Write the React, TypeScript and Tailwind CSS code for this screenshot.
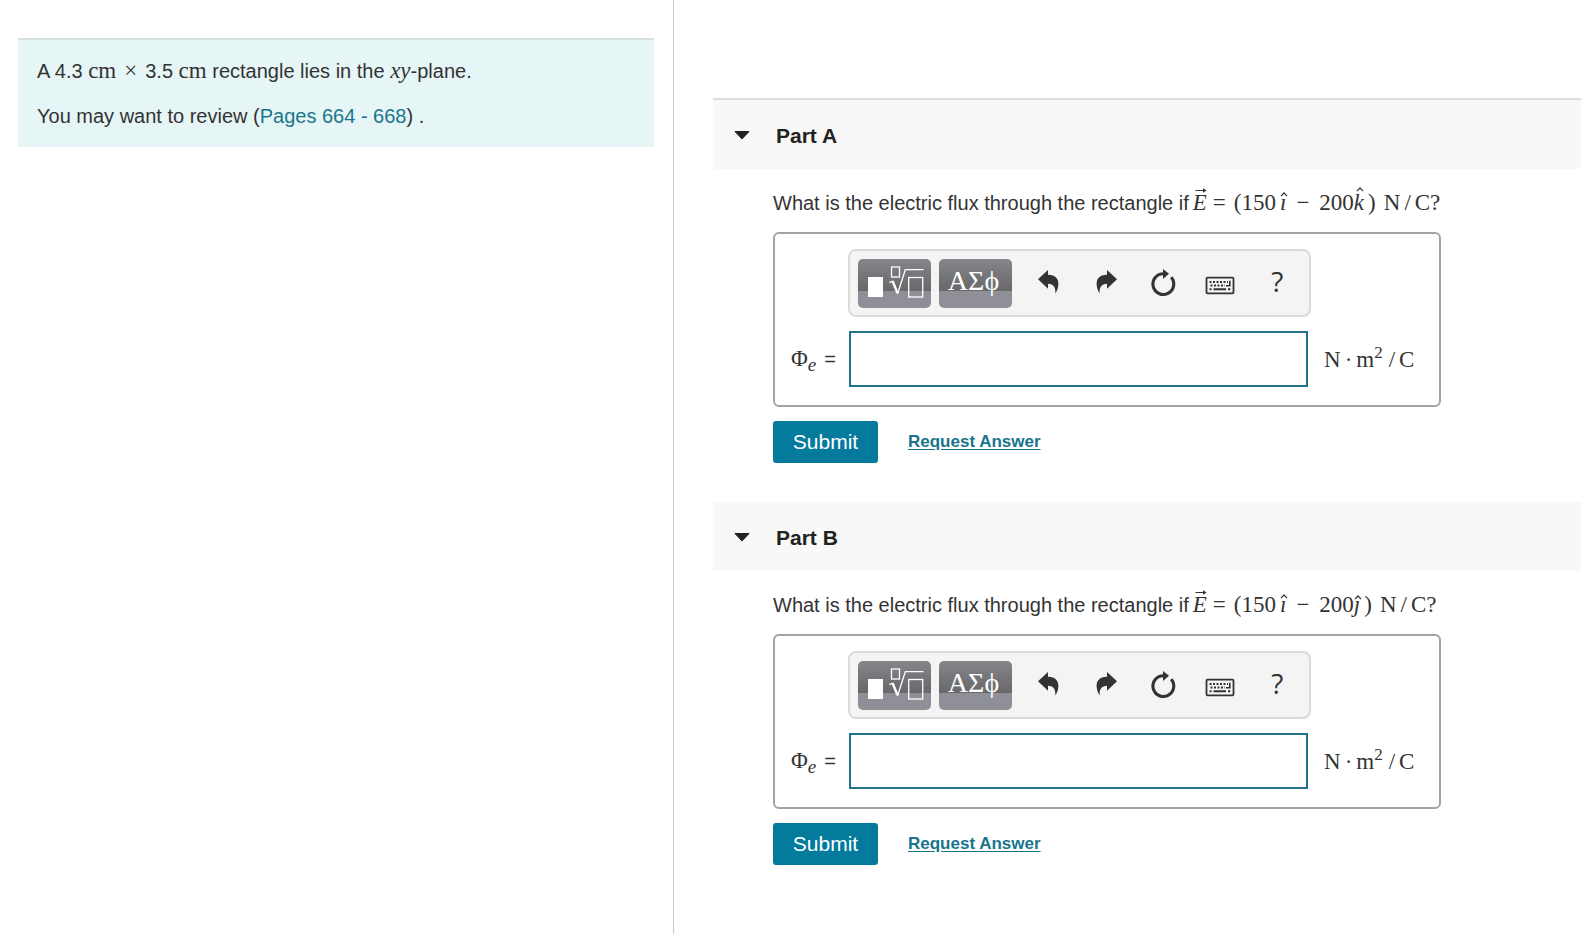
import { useId, useState } from "react";
import type { ReactNode } from "react";
import clsx from "clsx";

const parts = [
  { key: "A", second: "k", first: true },
  { key: "B", second: "ȷ", first: false },
];

const toolButton =
  "flex h-[49px] w-[73px] items-center justify-center rounded-[5px] bg-linear-to-b from-[#85858a] from-0% via-[#68686b] via-66% to-[#8f8f97] to-66% text-white";

function Serif({ children, italic, className }: { children: ReactNode; italic?: boolean; className?: string }) {
  return (
    <span className={clsx("font-['Liberation_Serif',serif] text-[23px] leading-none", italic && "italic", className)}>
      {children}
    </span>
  );
}

function Vector({ children }: { children: ReactNode }) {
  return (
    <Serif italic className="relative">
      {children}
      <svg viewBox="0 0 12 6" className="absolute -top-1 left-0.5 h-[6px] w-3" fill="none" stroke="currentColor" aria-hidden="true">
        <path d="M0.5 3.5H10" />
        <path d="M8 1.3L11.5 3.5L8 5.7Z" fill="currentColor" stroke="none" />
      </svg>
    </Serif>
  );
}

function Hat({ children, tall }: { children: ReactNode; tall?: boolean }) {
  return (
    <Serif italic className="relative">
      {children}
      <svg
        viewBox="0 0 8 5"
        className={clsx("absolute h-[5px] w-2", tall ? "-top-1 left-0.5" : "top-0.5 left-0")}
        fill="none"
        stroke="currentColor"
        strokeWidth="1.2"
        aria-hidden="true"
      >
        <path d="M1 4.2L4 1L7 4.2" />
      </svg>
    </Serif>
  );
}

function TemplatesIcon() {
  return (
    <svg viewBox="0 0 73 49" className="h-[49px] w-[73px]" fill="none" stroke="white" strokeWidth="1.3" aria-hidden="true">
      <rect x="10" y="18" width="15" height="20" fill="white" stroke="none" />
      <rect x="33.5" y="8" width="8" height="10" />
      <path d="M31.3 23.6L34.5 22" />
      <path d="M34.5 22L39.5 34" strokeWidth="2.4" />
      <path d="M39.5 35L47.3 10.7H65.5" />
      <rect x="50.7" y="18.5" width="14" height="19.5" />
    </svg>
  );
}

function UndoIcon({ flip }: { flip?: boolean }) {
  return (
    <svg viewBox="0 0 30 30" className={clsx("size-[30px]", flip && "-scale-x-100")} fill="currentColor" aria-hidden="true">
      <path d="M4 11.3L14 2V6.7C21 6.5 24.5 10.5 24.4 16C24.3 20 23 23 21.3 25.5C21.9 19.5 19.5 15.7 14 15.7V20.7Z" />
    </svg>
  );
}

function ResetIcon() {
  return (
    <svg viewBox="0 0 30 30" className="size-[30px]" aria-hidden="true">
      <path d="M15.5 5.7A10.4 10.4 0 1 0 23.2 9.3" fill="none" stroke="currentColor" strokeWidth="3.1" />
      <path d="M15 1L21 5.7L15 11Z" fill="currentColor" />
    </svg>
  );
}

function KeyboardIcon() {
  return (
    <svg viewBox="0 0 30 30" className="size-[30px]" fill="none" stroke="currentColor" aria-hidden="true">
      <rect x="1.5" y="9.7" width="27" height="15.6" rx="1" strokeWidth="1.8" />
      <path d="M4.5 14H23M5.5 17.5H20" strokeWidth="2" strokeDasharray="2 1.5" />
      <path d="M24.8 12.8V17.8H21" strokeWidth="1.6" />
      <path d="M4.5 21.3H6.5M8.5 21.3H21M23 21.3H25.3" strokeWidth="2" />
    </svg>
  );
}

function IconButton({ label, children }: { label: string; children: ReactNode }) {
  return (
    <button type="button" aria-label={label} className="flex flex-1 items-center justify-center text-[#333]">
      {children}
    </button>
  );
}

function Part({ name, second, first }: { name: string; second: string; first: boolean }) {
  const [open, setOpen] = useState(true);
  const [answer, setAnswer] = useState("");
  const inputId = useId();

  return (
    <section className="mb-[39px]">
      <h2>
        <button
          type="button"
          aria-expanded={open}
          onClick={() => setOpen((o) => !o)}
          className={clsx(
            "flex w-full items-center gap-[26px] bg-[#f8f8f8] pt-0.5 pl-[21px] text-[21px] font-bold text-[#222]",
            first ? "h-[71px] border-t-2 border-[#dcdfdf]" : "h-[69px]"
          )}
        >
          <svg
            viewBox="0 0 16 10"
            className={clsx("h-[10px] w-4", !open && "-rotate-90")}
            fill="currentColor"
            stroke="currentColor"
            strokeLinejoin="round"
            aria-hidden="true"
          >
            <path d="M1 0.5H15L8 8Z" />
          </svg>
          Part {name}
        </button>
      </h2>
      {open && (
        <form className="pl-[60px]" onSubmit={(e) => e.preventDefault()}>
          <p className="flex h-[63px] items-baseline pt-[22px] whitespace-nowrap">
            <span>What is the electric flux through the rectangle if</span>
            <span className="ml-1 flex items-baseline">
              <Vector>E</Vector>
              <Serif className="ml-1.5">=</Serif>
              <Serif className="ml-2">(150</Serif>
              <span className="ml-1">
                <Hat>ı</Hat>
              </span>
              <Serif className="ml-2.5">−</Serif>
              <Serif className="ml-2.5">200</Serif>
              <Hat tall={second === "k"}>{second}</Hat>
              <Serif className="ml-1">)</Serif>
              <Serif className="ml-2">N</Serif>
              <Serif className="ml-1">/</Serif>
              <Serif className="ml-1">C?</Serif>
            </span>
          </p>

          <div className="max-w-[668px] rounded-md border-2 border-[#a3a3a3] pt-[15px] pb-[18px]">
            <div className="pr-[128px] pl-[73px]">
              <div className="flex h-[68px] items-center gap-2 rounded-lg border-2 border-[#dadada] bg-[#f4f4f4] pr-[3px] pl-2">
                <button type="button" aria-label="Templates" className={toolButton}>
                  <TemplatesIcon />
                </button>
                <button type="button" aria-label="Symbols" className={toolButton}>
                  <span className="pr-1 pb-1 font-['Liberation_Serif',serif] text-[28px] leading-none">ΑΣϕ</span>
                </button>
                <div className="flex flex-1">
                  <IconButton label="Undo">
                    <UndoIcon />
                  </IconButton>
                  <IconButton label="Redo">
                    <UndoIcon flip />
                  </IconButton>
                  <IconButton label="Reset">
                    <ResetIcon />
                  </IconButton>
                  <IconButton label="Keyboard shortcuts">
                    <KeyboardIcon />
                  </IconButton>
                  <IconButton label="Help">
                    <span className="pb-1 font-['Open_Sans',sans-serif] text-[28px] leading-none">?</span>
                  </IconButton>
                </div>
              </div>
            </div>
            <div className="mt-[14px] flex items-center">
              <label htmlFor={inputId} className="flex w-[74px] items-baseline pl-4 whitespace-nowrap">
                <Serif>Φ</Serif>
                <sub className="font-['Liberation_Serif',serif] text-[19px] leading-none italic">e</sub>
                <span className="ml-2">=</span>
              </label>
              <input
                id={inputId}
                type="text"
                value={answer}
                onChange={(e) => setAnswer(e.target.value)}
                className="h-14 min-w-0 flex-1 border-2 border-[#1f728a] bg-white px-2 outline-none"
              />
              <span className="flex w-[131px] items-baseline pl-4 whitespace-nowrap">
                <Serif>N</Serif>
                <Serif className="ml-1">·</Serif>
                <Serif className="ml-1">m</Serif>
                <sup className="font-['Liberation_Serif',serif] text-[17px] leading-none">2</sup>
                <Serif className="ml-1.5">/</Serif>
                <Serif className="ml-1">C</Serif>
              </span>
            </div>
          </div>

          <div className="mt-[14px] flex items-center gap-[30px]">
            <button type="submit" className="h-[42px] w-[105px] rounded-[3px] bg-[#047a9c] text-[21px] text-white">
              Submit
            </button>
            <a href="#request-answer" className="text-[17px] font-bold text-[#19758c] underline underline-offset-2">
              Request Answer
            </a>
          </div>
        </form>
      )}
    </section>
  );
}

export default function App() {
  return (
    <div className="grid min-h-screen grid-cols-[674fr_907fr] bg-white font-['Liberation_Sans',Arial,sans-serif] text-[20px] leading-6 text-[#333]">
      <aside className="border-r border-[#bfcdd6] pt-[38px] pr-[19px] pl-[18px]">
        <div className="flex flex-col gap-[21px] border-t-2 border-[#d6dfdf] bg-[#e6f5f6] px-[19px] pt-[19px] pb-[19px]">
          <p>
            A 4.3 <Serif>cm</Serif>
            <Serif className="mx-2">×</Serif>
            3.5 <Serif>cm</Serif> rectangle lies in the <Serif italic>xy</Serif>-plane.
          </p>
          <p>
            You may want to review (
            <a href="#pages" className="text-[#19758c]">
              Pages 664 - 668
            </a>
            ) .
          </p>
        </div>
      </aside>
      <main className="pt-[98px] pl-[39px]">
        {parts.map((p) => (
          <Part key={p.key} name={p.key} second={p.second} first={p.first} />
        ))}
      </main>
    </div>
  );
}
